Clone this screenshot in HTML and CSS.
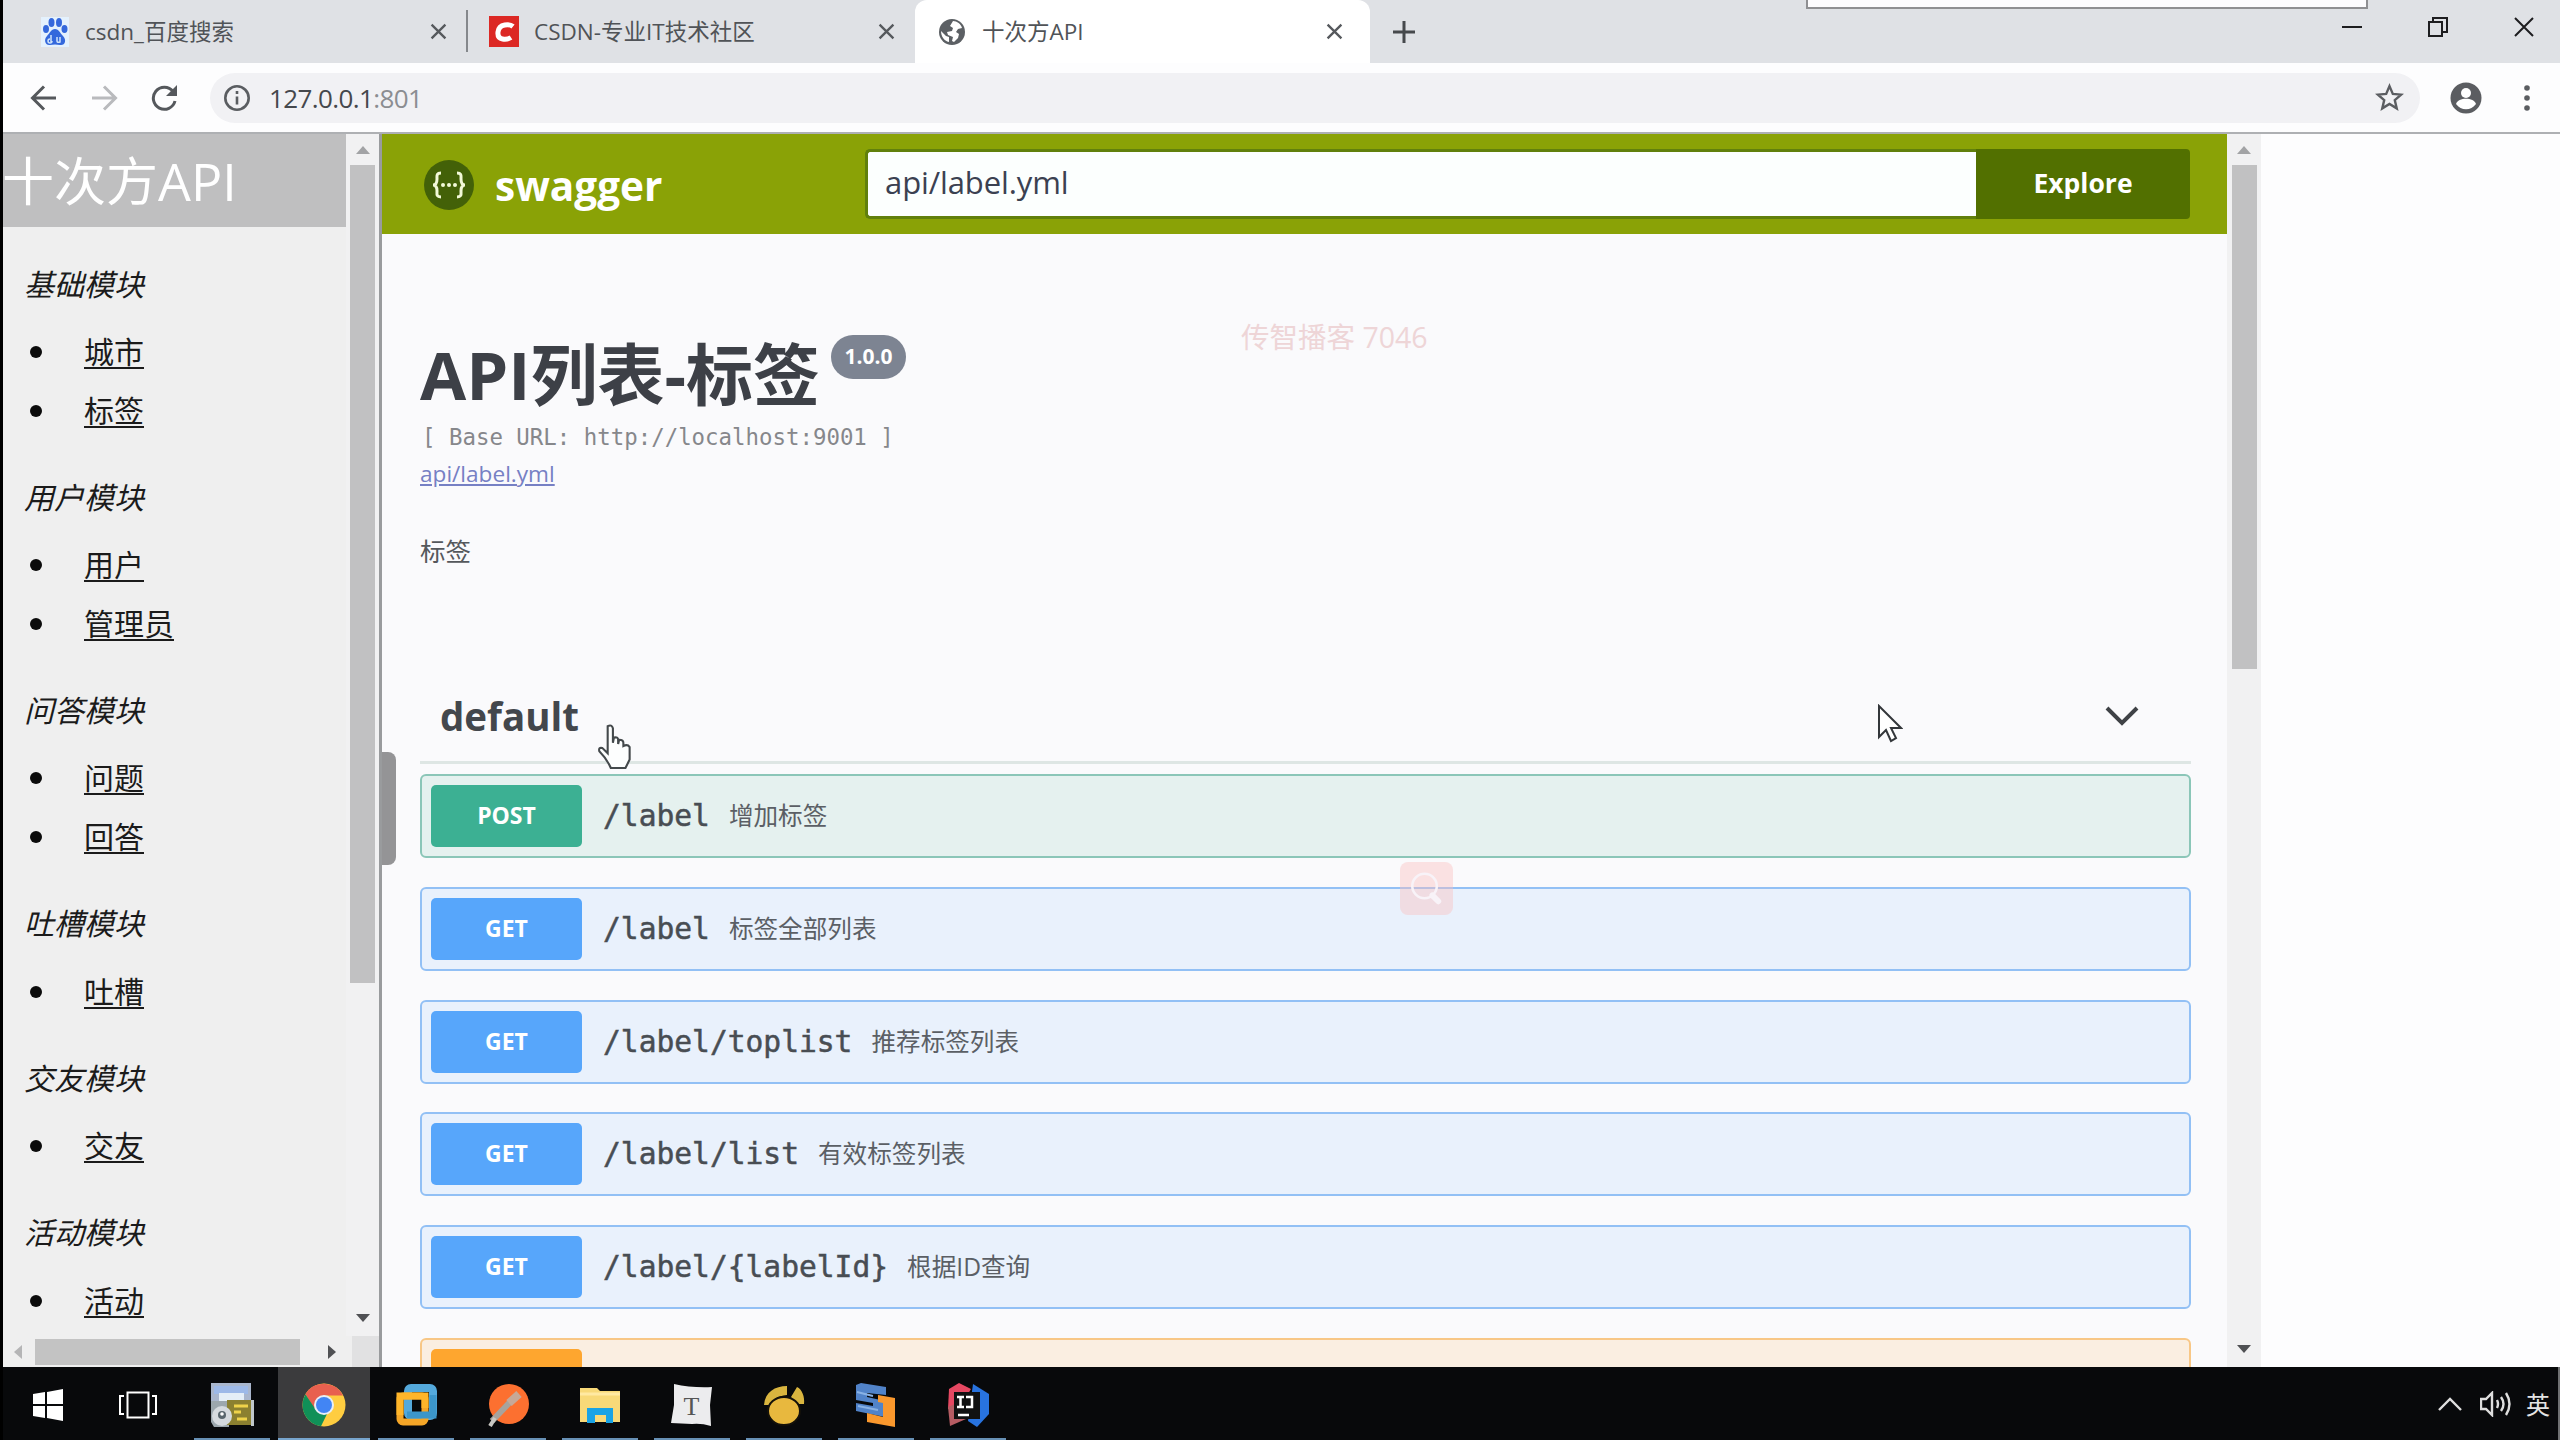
FILE: index.html
```html
<!DOCTYPE html>
<html lang="zh-CN">
<head>
<meta charset="utf-8">
<title>十次方API</title>
<link rel="stylesheet" href="styles.css">
</head>
<body>
<div class="screen">
  <header class="tabstrip">
    <div class="tab tab-baidu">
      <svg class="fav" viewBox="0 0 28 30"><rect width="28" height="30" fill="#e4f1fd"/><g fill="#3468dc"><ellipse cx="5" cy="12" rx="3" ry="4"/><ellipse cx="10.500" cy="5.500" rx="3" ry="4.500"/><ellipse cx="18" cy="5.500" rx="3" ry="4.500"/><ellipse cx="23.500" cy="12" rx="3" ry="4"/><path d="M14 12c-4 0-5 4-8 7-4 4-1 10 3 9 3-.7 7-.7 10 0 5 1 7-5 3-9-3-3-4-7-8-7z"/></g><path d="M10 18v7M9 22a2 2 0 1 0 2 2M16 20v4q0 2 3 1v-5" stroke="#cfe4fb" stroke-width="1.500" fill="none"/></svg>
      <span class="tab-title">csdn_百度搜索</span>
      <svg class="x" viewBox="0 0 16 16"><path d="M1.500 1.500l13 13M14.500 1.500l-13 13"/></svg>
    </div>
    <div class="tab tab-csdn">
      <svg class="fav" viewBox="0 0 30 31"><rect width="30" height="31" fill="#dc2824"/><path d="M24 10.500C21 8 10 7 9 16s9 8 13 5.500" stroke="#fff" stroke-width="5" fill="none"/></svg>
      <span class="tab-title">CSDN-专业IT技术社区</span>
      <svg class="x" viewBox="0 0 16 16"><path d="M1.500 1.500l13 13M14.500 1.500l-13 13"/></svg>
    </div>
    <div class="tab tab-active">
      <svg class="fav" viewBox="0 0 28 28"><circle cx="14" cy="14" r="13" fill="#5c6064"/><path d="M15 3c4 0 8 3 9 7l-4 1-2 3 3 2-1 4-4 4-2-1 1-4-5-2-1-3 5-1 1-3-3-2zM3 13l5 5 3 1v5c-5-1-8-6-8-11z" fill="#fff"/></svg>
      <span class="tab-title">十次方API</span>
      <svg class="x" viewBox="0 0 16 16"><path d="M1.500 1.500l13 13M14.500 1.500l-13 13"/></svg>
    </div>
    <svg class="plus" viewBox="0 0 24 24"><path d="M12 1v22M1 12h22"/></svg>
    <div class="float-panel"></div>
    <div class="win-controls">
      <svg viewBox="0 0 20 20"><path d="M0 10h20" /></svg>
      <svg viewBox="0 0 20 20"><path d="M1 5h13v14H1zM5 5V1h14v14h-5"/></svg>
      <svg viewBox="0 0 20 20"><path d="M1 1l18 18M19 1L1 19"/></svg>
    </div>
  </header>

  <div class="toolbar">
    <svg class="nav" viewBox="0 0 28 28"><path d="M26 14H3M14 2.500L2.500 14 14 25.500"/></svg>
    <svg class="nav dim" viewBox="0 0 28 28"><path d="M2 14h23M14 2.500L25.500 14 14 25.500"/></svg>
    <svg class="nav" viewBox="0 0 28 28"><path d="M23 7.500A11 11 0 1 0 25 17"/><path d="M27 1v11H16z" fill="#55585c" stroke="none"/></svg>
    <div class="omnibox">
      <svg class="info" viewBox="0 0 28 28"><circle cx="14" cy="14" r="11.700"/><path d="M14 12.500v8M14 7v3"/></svg>
      <span class="url">127.0.0.1<span class="port">:801</span></span>
      <svg class="star" viewBox="0 0 28 28"><path d="M14 3l3.200 7.500 8 .7-6.100 5.300 1.900 8L14 20.200 7 24.500l1.900-8-6.100-5.300 8-.7z"/></svg>
    </div>
    <svg class="account" viewBox="0 0 32 32"><circle cx="16" cy="16" r="15.500" fill="#5b5d61"/><circle cx="16" cy="11" r="5" fill="#fff"/><path d="M6 22c2-7 18-7 20 0-5 7-15 7-20 0z" fill="#fff"/></svg>
    <svg class="dots" viewBox="0 0 6 28"><circle cx="3" cy="4" r="2.800"/><circle cx="3" cy="14" r="2.800"/><circle cx="3" cy="24" r="2.800"/></svg>
  </div>

  <main class="content">
    <aside class="sidebar">
      <div class="side-row">
        <nav class="menu">
          <h1>十次方API</h1>
          <h2>基础模块</h2>
          <ul><li><a>城市</a></li><li><a>标签</a></li></ul>
          <h2>用户模块</h2>
          <ul><li><a>用户</a></li><li><a>管理员</a></li></ul>
          <h2>问答模块</h2>
          <ul><li><a>问题</a></li><li><a>回答</a></li></ul>
          <h2>吐槽模块</h2>
          <ul><li><a>吐槽</a></li></ul>
          <h2>交友模块</h2>
          <ul><li><a>交友</a></li></ul>
          <h2>活动模块</h2>
          <ul><li><a>活动</a></li></ul>
        </nav>
        <div class="vbar side-vbar"><i class="up"></i><b class="thumb"></b><i class="down"></i></div>
      </div>
      <div class="hbar"><i class="left"></i><b></b><i class="right"></i><span class="corner"></span></div>
    </aside>

    <section class="api">
      <span class="handle"></span>
      <div class="topbar">
        <svg class="logo" viewBox="0 0 52 52"><circle cx="26" cy="26" r="25" fill="#436108"/><g fill="none" stroke="#f2f9d8" stroke-width="3"><path d="M18 14c-5 0-4 3-4 6 0 4-1 6-4 6 3 0 4 2 4 6 0 3-1 6 4 6M34 14c5 0 4 3 4 6 0 4 1 6 4 6-3 0-4 2-4 6 0 3 1 6-4 6"/></g><g fill="#f2f9d8"><circle cx="20" cy="26" r="2"/><circle cx="26" cy="26" r="2"/><circle cx="32" cy="26" r="2"/></g></svg>
        <span class="brand">swagger</span>
        <div class="spec"><span>api/label.yml</span></div>
        <div class="explore">Explore</div>
      </div>
      <div class="doc">
        <div class="title"><span>API列表-标签</span><small>1.0.0</small></div>
        <pre class="base">[ Base URL: http://localhost:9001 ]</pre>
        <a class="spec-link">api/label.yml</a>
        <p class="desc">标签</p>
        <div class="tag"><span>default</span><svg viewBox="0 0 34 20"><path d="M2 2l15 15L32 2"/></svg></div>
        <div class="op post"><b>POST</b><code>/label</code><span>增加标签</span></div>
        <div class="op get"><b>GET</b><code>/label</code><span>标签全部列表</span></div>
        <div class="op get"><b>GET</b><code>/label/toplist</code><span>推荐标签列表</span></div>
        <div class="op get"><b>GET</b><code>/label/list</code><span>有效标签列表</span></div>
        <div class="op get"><b>GET</b><code>/label/{labelId}</code><span>根据ID查询</span></div>
        <div class="op put"><b></b></div>
      </div>
    </section>
    <div class="vbar api-vbar"><i class="up"></i><b class="thumb"></b><i class="down"></i></div>
  </main>

  <footer class="taskbar">
    <div class="cell"><svg viewBox="0 0 44 44"><path d="M7 11l12-2v12H7zM21 9l16-3v15H21zM7 23h12v12L7 33zM21 23h16v15l-16-3z" fill="#fff"/></svg></div>
    <div class="cell tv"><svg viewBox="0 0 44 44"><path d="M11.500 9.500h21v25h-21zM8 13H4v18h4M36 13h4v18h-4" fill="none" stroke="#fff" stroke-width="2"/></svg></div>
    <div class="cell run"><svg viewBox="0 0 44 44"><path d="M1 0h40v20H1z" fill="#a9b6cd"/><path d="M4 3h34v8H4z" fill="#9db9e8"/><path d="M9 10h25v9H9z" fill="#e4eef7"/><path d="M1 18h18v26H4l-3-5z" fill="#9ca7ad"/><path d="M17 17h26v25H17z" fill="#8b8030"/><path d="M41 17h3v26h-3z" fill="#c1c8cb"/><path d="M24 23h14M24 29h7M27 36h10" stroke="#efd34a" stroke-width="3"/><circle cx="12" cy="33" r="10" fill="#d5dade"/><circle cx="12" cy="32" r="4" fill="#59666d"/><circle cx="12" cy="31" r="1.800" fill="#fff"/></svg></div>
    <div class="cell run on"><svg viewBox="0 0 44 44"><circle cx="22" cy="22" r="21.500" fill="#ffcd40"/><path d="M3.400 11.200A21.500 21.500 0 0 1 41 12.500H22L13 27z" fill="#e8604f"/><path d="M3.400 11.200L14 27l11 4-6 12.300A21.500 21.500 0 0 1 3.400 11.200z" fill="#109058"/><circle cx="22" cy="22" r="10" fill="#e9eef5"/><circle cx="22" cy="22" r="8" fill="#4285f4"/></svg></div>
    <div class="cell run"><svg viewBox="0 0 44 44"><rect x="14" y="5" width="25" height="28" rx="3" fill="none" stroke="#54a9dc" stroke-width="8"/><rect x="6" y="13" width="25" height="26" rx="3" fill="none" stroke="#f5a627" stroke-width="7"/><path d="M13 32h26V12" fill="none" stroke="#3c96ca" stroke-width="7"/><path d="M6 32V13h25v12" fill="none" stroke="#ffb529" stroke-width="7"/></svg></div>
    <div class="cell run"><svg viewBox="0 0 44 44"><circle cx="23" cy="21" r="20" fill="#fc7030"/><path d="M6 38l19-20" stroke="#a7a39d" stroke-width="6"/><path d="M23 20l10-9" stroke="#c6a898" stroke-width="8"/><path d="M4 43l5-8" stroke="#c8c7c2" stroke-width="4"/></svg></div>
    <div class="cell run"><svg viewBox="0 0 44 44"><path d="M2 5h17l3 3h20v31H2z" fill="#f8d978"/><path d="M2 11h40" stroke="#ffe9a2" stroke-width="3"/><path d="M9 25h26v15h-7v-8H17v8H9z" fill="#19a3e5"/></svg></div>
    <div class="cell run"><svg viewBox="0 0 44 44"><path d="M4 1q18 4 38 3l-2 18 1 21q-10-3-19-2L1 40l3-18z" fill="#ececee"/><text x="21.500" y="32" class="typora">T</text></svg></div>
    <div class="cell run"><svg viewBox="0 0 44 44"><path d="M2 22C3 9 13 3 25 3v9C15 13 11 16 9 22zM29 14l6-10c5 2 8 10 7 17H33z" fill="#d9b53f"/><ellipse cx="22" cy="28" rx="16" ry="14" fill="#e8b83e" stroke="#14110a" stroke-width="2"/></svg></div>
    <div class="cell run"><svg viewBox="0 0 44 44"><path d="M2 2l5-2 25 4v8L13 10v4l18 4v16L2 28v-8l17 3v-3L2 17z" fill="#5183c9"/><path d="M24 12l17 3v29l-28-5v-9l16 4V20l-5-1z" fill="#fa982d"/><path d="M3 9l16 4M4 23l20 4" stroke="#89b2e5" stroke-width="2"/></svg></div>
    <div class="cell run"><svg viewBox="0 0 44 44"><path d="M3 6L13 0l12 6-12 20H2z" fill="#e64862"/><path d="M2 24l18-8v20L4 43z" fill="#b65c63"/><path d="M27 1l16 10v20L31 44l-9-6z" fill="#2873df"/><path d="M8 9h26v27H8z" fill="#111"/><path d="M11 14h7M14.500 14v10M11 24h7M20 14h6v10h-6M12 32h11" stroke="#fff" stroke-width="2.500" fill="none"/></svg></div>
    <div class="tray">
      <svg class="caret" viewBox="0 0 24 14"><path d="M1 13L12 2l11 11"/></svg>
      <svg class="vol" viewBox="0 0 32 26"><path d="M1 8h5l6-6v22l-6-6H1zM17 9q2 4 0 8M21 6q5 7 0 14M26 2q7 11 0 22"/></svg>
      <span>英</span>
    </div>
  </footer>

  <span class="watermark">传智播客 7046</span>
  <span class="search-badge"><svg viewBox="0 0 54 54"><ellipse cx="25" cy="24.500" rx="12.500" ry="12.500"/><path d="M33 34l6 6" class="grip"/></svg></span>
  <svg class="hand" viewBox="0 0 34 44"><path d="M10 3q4-2 5 2v14l1-5q4-1 4 2v4l1-4q4 0 4 3v3q4-2 6 1v12q-2 4-4 8H13Q9 34 2 27q-1-4 3-3l5 5z"/></svg>
  <svg class="arrow" viewBox="0 0 26 40"><path d="M2 2v31l7-7 5 11 5-3-5-10h10z"/></svg>
</div>
</body>
</html>
```
FILE: styles.css
```css
* { box-sizing: border-box; }
body {
  margin: 0;
  background: #000;
  color: #333;
  font-family: "Open Sans", "Noto Sans CJK SC", sans-serif;
}
svg { display: block; flex: none; }
.screen {
  position: relative;
  width: 2560px;
  height: 1440px;
  overflow: hidden;
  padding-left: 3px;
  display: flex;
  flex-direction: column;
}

/* Tab strip */
.tabstrip {
  position: relative;
  height: 63px;
  flex: none;
  background: #dfe1e5;
  display: flex;
  align-items: center;
}
.tab { height: 63px; display: flex; align-items: center; padding-bottom: 0; }
.tab-title {
  flex: 1;
  margin-left: 16px;
  font-size: 22.5px;
  line-height: 30px;
  color: #505357;
  white-space: nowrap;
}
.fav { width: 28px; height: 30px; }
.x { width: 17px; height: 17px; fill: none; stroke: #56595d; stroke-width: 2.2; }
.tab-baidu { width: 465px; padding: 0 21px 0 38px; background: linear-gradient(#85888c, #85888c) 463px 10px / 2px 42px no-repeat; }
.tab-csdn { width: 447px; padding: 0 20px 0 21px; }
.tab-csdn .fav { width: 30px; height: 31px; }
.tab-csdn .tab-title { margin-left: 15px; }
.tab-active { width: 455px; padding: 0 27px 0 23px; background: #fff; border-radius: 12px 12px 0 0; }
.tab-active .fav { height: 28px; }
.plus { width: 24px; height: 24px; margin-left: 22px; fill: none; stroke: #46494c; stroke-width: 3; }
.float-panel {
  position: absolute;
  left: 1803px;
  top: 0;
  width: 562px;
  height: 9px;
  background: #fdfcfe;
  border: 2px solid #8f8f92;
  border-top: 0;
}
.win-controls { display: flex; gap: 66px; margin-left: auto; margin-right: 26px; padding-bottom: 10px; }
.win-controls svg { width: 20px; height: 20px; fill: none; stroke: #1d1d1f; stroke-width: 2; }

/* Toolbar */
.toolbar {
  height: 71px;
  flex: none;
  background: #fdfdfe;
  border-bottom: 2px solid #aeb0b3;
  display: flex;
  align-items: center;
  padding: 0 30px 0 27px;
}
.nav { width: 28px; height: 28px; margin-right: 32px; fill: none; stroke: #55585c; stroke-width: 3; }
.nav.dim { stroke: #b9babd; }
.omnibox {
  flex: 1;
  height: 50px;
  margin-left: 2px;
  border-radius: 25px;
  background: #f1f1f4;
  display: flex;
  align-items: center;
  padding: 0 16px 0 13px;
}
.nav + .omnibox { margin-left: 0; }
.info { width: 28px; height: 28px; fill: none; stroke: #5a5d61; stroke-width: 2.6; }
.url { flex: 1; margin-left: 18px; font-size: 26px; letter-spacing: -.6px; color: #45484c; }
.port { color: #8b8d91; }
.star { width: 29px; height: 29px; fill: none; stroke: #5b5d61; stroke-width: 2.3; }
.account { width: 32px; height: 32px; margin-left: 30px; }
.dots { width: 6px; height: 28px; margin-left: 42px; fill: #5b5d61; }

/* Page */
.content { flex: none; height: 1233px; display: flex; background: #fdfdfe; overflow: hidden; }
.sidebar { width: 379px; flex: none; background: #efefef; border-right: 3px solid #999b9d; display: flex; flex-direction: column; }
.side-row { height: 1202px; display: flex; overflow: hidden; }
.menu { width: 343px; overflow: hidden; color: #1b1b1b; }
.menu h1 {
  margin: 0 0 0 -1px;
  height: 93px;
  line-height: 93px;
  background: #bfbfc0;
  color: #fff;
  font-weight: 400;
  font-size: 52px;
  white-space: nowrap;
}
.menu h2 { margin: 0; padding: 18.500px 0 0 21px; font-size: 30px; font-weight: 400; font-style: italic; line-height: 77.300px; }
.menu ul { margin: 0; padding: 0; list-style: none; }
.menu li { height: 58.700px; display: flex; align-items: center; padding-left: 27px; font-size: 30px; line-height: 40px; }
.menu li::before { content: ""; width: 12px; height: 12px; border-radius: 50%; background: #0b0b0b; margin-right: 42px; }
.menu a { text-decoration: underline; text-decoration-thickness: 2px; text-underline-offset: 4px; }

.vbar { display: flex; flex-direction: column; align-items: center; background: #f1f1f2; }
.side-vbar { width: 33px; }
.vbar i, .hbar i { width: 0; height: 0; border: 7px solid transparent; flex: none; }
.vbar .up { border-bottom: 8px solid #a2a3a5; border-top: 0; margin: 12px 0 11px; }
.vbar .down { border-top: 8px solid #505154; border-bottom: 0; margin-top: auto; margin-bottom: 14px; }
.vbar .thumb { background: #c1c1c2; width: 25px; height: 818px; }
.api-vbar .thumb { height: 504px; }
.hbar { height: 31px; display: flex; align-items: center; }
.hbar .left { border-right: 8px solid #b5b5b6; border-left: 0; margin-left: 11px; }
.hbar b { width: 265px; height: 26px; background: #c3c3c3; margin-left: 13px; }
.hbar .right { border-left: 8px solid #505154; border-right: 0; margin-left: 28px; }
.corner { width: 27px; height: 31px; margin-left: 16px; background: #e1e1e2; }

.api { position: relative; width: 1845px; flex: none; background: #fafafc; }
.api-vbar { width: 34px; padding-right: 0; }
.handle { position: absolute; left: 0; top: 618px; width: 14px; height: 113px; background: #949496; border-radius: 0 8px 8px 0; }
.topbar { height: 100px; background: #8aa206; display: flex; align-items: center; padding: 0 37px 0 41px; }
.logo { width: 52px; height: 52px; margin-top: 2px; }
.brand { width: 370px; margin-left: 20px; margin-top: 3px; font-size: 40.500px; line-height: 56px; font-weight: 700; color: #fff; }
.spec { flex: 1; height: 70px; border: 3px solid #61800c; border-right: 0; border-radius: 5px 0 0 5px; background: #fcfffe; font-size: 31px; line-height: 60px; padding-left: 17px; letter-spacing: -.1px; color: #3b4151; }
.explore { width: 214px; height: 70px; background: #527000; color: #fff; font-weight: 700; font-size: 26.500px; line-height: 69px; text-align: center; border-radius: 0 4px 4px 0; }

.doc { padding: 92px 36px 0 38px; }
.title { display: flex; height: 96px; color: #3d4047; font-weight: 700; }
.title span { font-size: 67px; line-height: 96px; white-space: nowrap; }
.title small { width: 75px; height: 44px; margin: 9px 0 0 11px; border-radius: 22px; background: #7d8492; color: #fff; font-size: 21px; line-height: 43px; text-align: center; }
.base { margin: 0; height: 31px; padding-left: 2px; font: 22.400px/31px "DejaVu Sans Mono", monospace; color: #86878b; }
.spec-link { display: block; height: 42px; font-size: 22.600px; line-height: 41px; color: #7680c4; text-decoration: underline; }
.desc { margin: 35px 0 0; font-size: 25.500px; line-height: 42px; color: #55585c; }
.tag { height: 122px; margin: 69px 0 10px; padding: 29px 52px 0 20px; margin-top: 69px; border-bottom: 3px solid #dee6e4; display: flex; justify-content: space-between; align-items: center; }
.desc + .tag { margin-top: 70px; }
.tag span { font-size: 38.500px; line-height: 52px; font-weight: 700; color: #43474c; }
.tag svg { width: 34px; height: 20px; fill: none; stroke: #3f4246; stroke-width: 4; }
.op { height: 84px; margin-bottom: 28.800px; padding: 0 9px; border: 2.500px solid; border-radius: 6px; display: flex; align-items: center; white-space: nowrap; }
.op b { width: 151px; height: 62px; border-radius: 5px; color: #fff; font-size: 23px; line-height: 61px; text-align: center; }
.op code { margin-left: 21px; font: 29.600px/40px "DejaVu Sans Mono", monospace; color: #484d53; -webkit-text-stroke: .5px #484d53; }
.op span { margin-left: 19px; font-size: 24.600px; line-height: 40px; color: #5b5f65; }
.post { background: #e5f1ef; border-color: #8bc6b8; }
.post b { background: #3cb093; }
.get { background: #e9f1fc; border-color: #92c0f5; }
.get b { background: #57a6fb; }
.put { background: #faeee1; border-color: #f8c786; }
.put b { background: #fea62f; }

/* Taskbar */
.taskbar { height: 73px; flex: none; background: #08090b; display: flex; border-right: 2px solid #6f7072; }
.cell { width: 92px; height: 73px; flex: none; padding: 16px 24px 0; }
.cell:first-child { margin-left: -1px; }
.cell svg { width: 44px; height: 44px; }
.cell.tv { padding-left: 22px; }
.run { background: linear-gradient(#6790b5, #6790b5) 8px 71px / 76px 2px no-repeat; }
.run.on { background: linear-gradient(#77a5cd, #77a5cd) 0 71px / 92px 2px no-repeat #3b3b3d; }
.typora { font: 26px "Liberation Serif", serif; text-anchor: middle; fill: #555; }
.tray { margin-left: auto; padding-right: 8px; display: flex; align-items: center; color: #e4e4e4; font-size: 24px; }
.tray svg { fill: none; stroke: #dedede; stroke-width: 2.4; }
.caret { width: 24px; height: 14px; margin-right: 18px; }
.vol { width: 32px; height: 26px; margin-right: 14px; }

/* Overlays */
.watermark { position: absolute; left: 1241px; top: 317px; font-size: 28.500px; line-height: 40px; color: #eed5d7; white-space: nowrap; }
.search-badge { position: absolute; left: 1400px; top: 862px; width: 53px; height: 53px; border-radius: 8px; background: rgba(250, 190, 190, .42); }
.search-badge svg { width: 53px; height: 53px; fill: none; stroke: #f8f3f8; stroke-width: 2.600; }
.search-badge .grip { stroke-width: 6; stroke-linecap: round; }
.hand { position: absolute; left: 597px; top: 723px; width: 36px; height: 46px; fill: #fdfefe; stroke: #44494c; stroke-width: 2; }
.arrow { position: absolute; left: 1877px; top: 704px; width: 26px; height: 40px; fill: #fff; stroke: #33363a; stroke-width: 2; }
```
